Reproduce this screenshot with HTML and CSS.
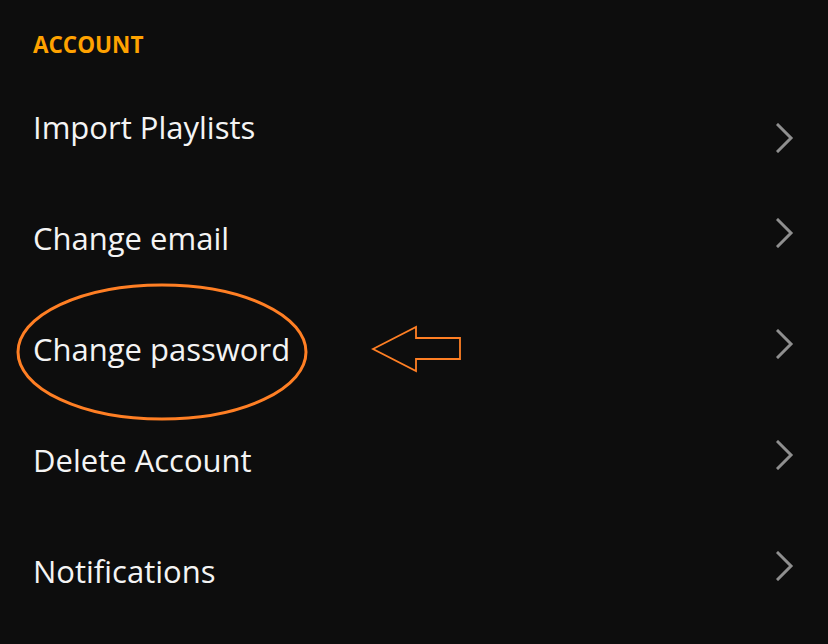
FILE: index.html
```html
<!DOCTYPE html>
<html>
<head>
    <title>Account Settings</title>
    <link rel="stylesheet" href="styles.css">
</head>
<body>
    <div class="settings">
        <h2 class="section-title">ACCOUNT</h2>
        <ul class="menu">
            <li class="menu-item first">
                <span class="label">Import Playlists</span>
                <svg class="chevron" width="18" height="30" viewBox="0 0 18 30"><polyline points="2,2 15,15 2,28" /></svg>
            </li>
            <li class="menu-item">
                <span class="label">Change email</span>
                <svg class="chevron" width="18" height="30" viewBox="0 0 18 30"><polyline points="2,2 15,15 2,28" /></svg>
            </li>
            <li class="menu-item">
                <span class="label">Change password</span>
                <svg class="chevron" width="18" height="30" viewBox="0 0 18 30"><polyline points="2,2 15,15 2,28" /></svg>
            </li>
            <li class="menu-item">
                <span class="label">Delete Account</span>
                <svg class="chevron" width="18" height="30" viewBox="0 0 18 30"><polyline points="2,2 15,15 2,28" /></svg>
            </li>
            <li class="menu-item">
                <span class="label">Notifications</span>
                <svg class="chevron" width="18" height="30" viewBox="0 0 18 30"><polyline points="2,2 15,15 2,28" /></svg>
            </li>
        </ul>

        <!-- highlight drawn over the screenshot -->
        <svg class="annotation" width="828" height="644" viewBox="0 0 828 644">
            <ellipse cx="162" cy="352" rx="144" ry="67" />
            <polygon class="arrow" points="373,349 416,327 416,338 460,338 460,359 416,359 416,371" />
        </svg>
    </div>
</body>
</html>
```

FILE: styles.css
```css
body {
    margin: 0;
    background-color: #0d0d0d;
    font-family: "Open Sans", sans-serif;
}
.settings {
    position: relative;
    width: 828px;
    height: 644px;
    box-sizing: border-box;
    padding: 0 34px 0 33px;
}
.section-title {
    margin: 0;
    height: 71px;
    padding-top: 30px;
    box-sizing: border-box;
    font-size: 22.5px;
    font-weight: 700;
    line-height: 30px;
    color: #ffa200;
}
.menu {
    list-style: none;
    margin: 0;
    padding: 0;
}
.menu-item {
    display: flex;
    align-items: center;
    justify-content: space-between;
    height: 111px;
}
.label {
    font-size: 31px;
    font-weight: 500;
    color: #f4f4f4;
}
.chevron {
    margin-top: -9px;
}
.menu-item.first .chevron {
    margin-top: 22px;
}
.chevron polyline {
    fill: none;
    stroke: #8f8f8f;
    stroke-width: 3;
    stroke-linecap: square;
}
.annotation {
    position: absolute;
    top: 0;
    left: 0;
    pointer-events: none;
}
.annotation ellipse {
    fill: none;
    stroke: #ff7f24;
    stroke-width: 3;
}
.annotation .arrow {
    fill: none;
    stroke: #ff7f24;
    stroke-width: 1.8;
}
```
